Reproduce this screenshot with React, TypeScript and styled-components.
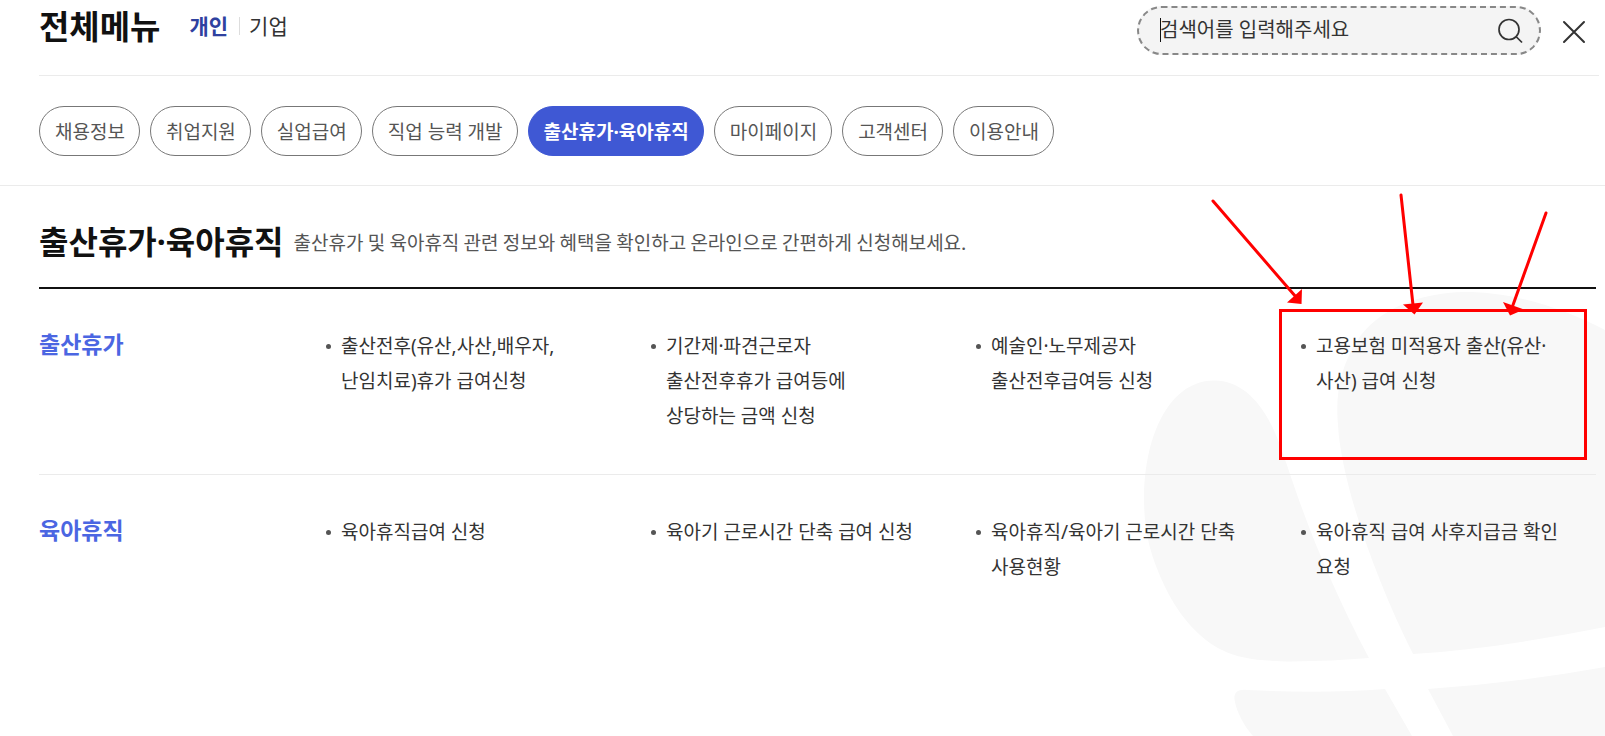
import React from "react";
import styled, { createGlobalStyle } from "styled-components";

const GlobalStyle = createGlobalStyle`
  *, *::before, *::after { box-sizing: border-box; }
  body {
    margin: 0;
    background: #fff;
    color: #333;
    font-family: "Noto Sans", "Noto Sans CJK KR", sans-serif;
    font-size: 19px;
    word-break: keep-all;
  }
  h1, h2, h3, p, ul { margin: 0; padding: 0; }
  ul { list-style: none; }
  button, input { font: inherit; color: inherit; }
  a { color: inherit; text-decoration: none; }
`;

const Page = styled.div`
  position: relative;
  isolation: isolate;
  min-height: 100vh;
  overflow: hidden;
`;

const Backdrop = styled.svg`
  position: absolute;
  z-index: -1;
  top: 180px;
  right: 0;
  width: 500px;
  height: 556px;
  fill: #f8f8f8;
`;

const Annotation = styled.svg`
  position: absolute;
  z-index: 1;
  top: 180px;
  right: 0;
  width: 500px;
  height: 300px;
  fill: #f00;
  stroke: #f00;
  pointer-events: none;
`;

const Header = styled.header`
  display: flex;
  align-items: flex-start;
  margin: 0 6px 0 39px;
  padding: 6px 8px 20px 0;
  border-bottom: 1px solid #ebebeb;
`;

const MenuTitle = styled.h1`
  font-size: 33px;
  line-height: 42px;
  font-weight: 700;
  color: #111;
`;

const AudienceList = styled.ul`
  display: flex;
  align-items: center;
  margin-left: 29px;
  height: 40px;
`;

const AudienceItem = styled.li`
  display: flex;
  align-items: center;

  & + &::before {
    content: "";
    width: 1px;
    height: 18px;
    margin: 0 9px 0 11px;
    background: #ddd;
  }
`;

const AudienceLink = styled.a<{ $active?: boolean }>`
  font-size: 21px;
  line-height: 32px;
  font-weight: ${(p) => (p.$active ? 700 : 400)};
  color: ${(p) => (p.$active ? "#2f419f" : "#333")};
`;

const SearchBox = styled.form`
  position: relative;
  display: flex;
  align-items: center;
  width: 404px;
  height: 49px;
  margin-left: auto;
  padding: 0 13px 0 21px;
  border: 2px dashed #888;
  border-radius: 25px;
  background: #f4f4f4;
`;

const SearchInput = styled.input`
  flex: 1;
  min-width: 0;
  height: 40px;
  padding: 0 0 2px;
  border: 0;
  outline: 0;
  background: transparent;
  font-size: 20px;

  &::placeholder { color: #333; opacity: 1; }
`;

const Caret = styled.span`
  position: absolute;
  top: 10px;
  left: 21px;
  width: 1px;
  height: 24px;
  background: #111;
`;

const IconButton = styled.button`
  display: flex;
  align-items: center;
  justify-content: center;
  width: 32px;
  height: 32px;
  padding: 0;
  border: 0;
  background: none;
  cursor: pointer;
`;

const CloseButton = styled(IconButton)`
  margin: 10px 1px 0 17px;
`;

const TabBar = styled.nav`
  padding: 30px 39px 29px;
  border-bottom: 1px solid #ebebeb;
`;

const TabList = styled.ul`
  display: flex;
  flex-wrap: wrap;
  gap: 10px;
`;

const Tab = styled.button<{ $active?: boolean }>`
  height: 50px;
  padding: 0 14px 0 15px;
  border: 1px solid ${(p) => (p.$active ? "#3f58d4" : "#777")};
  border-radius: 25px;
  background: ${(p) => (p.$active ? "#3f58d4" : "#fff")};
  color: ${(p) => (p.$active ? "#fff" : "#555")};
  font-size: 19px;
  font-weight: ${(p) => (p.$active ? 700 : 400)};
  white-space: nowrap;
  cursor: pointer;
`;

const Section = styled.main`
  padding: 32px 9px 0 39px;
`;

const SectionHead = styled.div`
  display: flex;
  align-items: center;
  gap: 10px;
  padding-bottom: 21px;
  border-bottom: 2px solid #111;
`;

const SectionTitle = styled.h2`
  font-size: 32px;
  line-height: 48px;
  font-weight: 700;
  color: #111;
`;

const SectionText = styled.p`
  font-family: "Noto Sans CJK KR", sans-serif;
  font-size: 19px;
  line-height: 28px;
  color: #555;
`;

const Group = styled.section`
  display: grid;
  grid-template-columns: 257px 1fr;
  padding: 40px 0;

  & + & { border-top: 1px solid #ebebeb; }
`;

const GroupName = styled.h3`
  font-size: 23px;
  line-height: 30px;
  font-weight: 700;
  color: #4b66e2;
`;

const LinkGrid = styled.ul`
  display: grid;
  grid-template-columns: repeat(4, 1fr);
`;

const LinkItem = styled.li`
  display: flex;
  gap: 10px;
  padding: 0 20px 0 30px;

  &::before {
    content: "";
    flex: none;
    width: 5px;
    height: 5px;
    margin-top: 15px;
    border-radius: 50%;
    background: #555;
  }
`;

const MenuLink = styled.a`
  font-size: 19px;
  line-height: 35px;
  white-space: pre-line;
`;

const tabs = [
  "채용정보",
  "취업지원",
  "실업급여",
  "직업 능력 개발",
  "출산휴가·육아휴직",
  "마이페이지",
  "고객센터",
  "이용안내",
];

const activeTab = "출산휴가·육아휴직";

const groups = [
  {
    name: "출산휴가",
    links: [
      "출산전후(유산,사산,배우자,\n난임치료)휴가 급여신청",
      "기간제·파견근로자\n출산전후휴가 급여등에\n상당하는 금액 신청",
      "예술인·노무제공자\n출산전후급여등 신청",
      "고용보험 미적용자 출산(유산·\n사산) 급여 신청",
    ],
  },
  {
    name: "육아휴직",
    links: [
      "육아휴직급여 신청",
      "육아기 근로시간 단축 급여 신청",
      "육아휴직/육아기 근로시간 단축\n사용현황",
      "육아휴직 급여 사후지급금 확인\n요청",
    ],
  },
];

export default function App() {
  return (
    <Page>
      <GlobalStyle />
      <Backdrop viewBox="0 0 500 556" aria-hidden="true">
        <path d="M110 200.500C135 201 157 219 173 260C179 276 183 288 187 300C205 354 232 418 264 478Q228 481 187 481.500C155 481 135 479 117 470C98 461 76 440 60 407C44 373 39 350 39 317C40 252 66 200 110 200.500Z" />
        <path d="M500 150C455 126 405 112 360 112C312 113 272 130 252 161C236 186 230 213 233 245C236 300 268 394 308 474C372 470 440 459 500 447Z" />
        <path d="M142 510C131 509 128 514 130 522C132 532 139 546 148 556H307L280 509Q218 514 142 510Z" />
        <path d="M323 509L348 556H500V487Q411 503 323 509Z" />
      </Backdrop>

      <Header>
        <MenuTitle>전체메뉴</MenuTitle>
        <AudienceList>
          <AudienceItem>
            <AudienceLink href="#personal" $active>개인</AudienceLink>
          </AudienceItem>
          <AudienceItem>
            <AudienceLink href="#company">기업</AudienceLink>
          </AudienceItem>
        </AudienceList>
        <SearchBox role="search" onSubmit={(e) => e.preventDefault()}>
          <SearchInput type="text" aria-label="검색어" placeholder="검색어를 입력해주세요" />
          <Caret />
          <IconButton type="submit" aria-label="검색">
            <svg width="26" height="26" viewBox="0 0 26 26" fill="none" stroke="#333" strokeWidth="1.700">
              <circle cx="12" cy="11.500" r="10" />
              <path d="M19 18.500L25 24.500" />
            </svg>
          </IconButton>
        </SearchBox>
        <CloseButton type="button" aria-label="닫기">
          <svg width="24" height="24" viewBox="0 0 24 24" fill="none" stroke="#333" strokeWidth="2" strokeLinecap="round">
            <path d="M2 2L22 22M22 2L2 22" />
          </svg>
        </CloseButton>
      </Header>

      <TabBar>
        <TabList>
          {tabs.map((tab) => (
            <li key={tab}>
              <Tab type="button" $active={tab === activeTab}>{tab}</Tab>
            </li>
          ))}
        </TabList>
      </TabBar>

      <Section>
        <SectionHead>
          <SectionTitle>출산휴가·육아휴직</SectionTitle>
          <SectionText>
            출산휴가 및 육아휴직 관련 정보와 혜택을 확인하고 온라인으로 간편하게 신청해보세요.
          </SectionText>
        </SectionHead>
        {groups.map((group) => (
          <Group key={group.name}>
            <GroupName>{group.name}</GroupName>
            <LinkGrid>
              {group.links.map((link) => (
                <LinkItem key={link}>
                  <MenuLink href="#menu">{link}</MenuLink>
                </LinkItem>
              ))}
            </LinkGrid>
          </Group>
        ))}
      </Section>

      <Annotation viewBox="0 0 500 300" aria-hidden="true">
        <rect x="175.500" y="130.500" width="305" height="148" fill="none" strokeWidth="3" />
        <g strokeWidth="3" strokeLinecap="round">
          <path d="M108 21L191 117" />
          <path d="M296 15L308 125" />
          <path d="M441 33L408 125" />
        </g>
        <g stroke="none">
          <path d="M197 109L196.500 124L182 122.500Z" />
          <path d="M298 124.500L318 122.500L309.500 134.500Z" />
          <path d="M398 122L419 129.500L405 135.500Z" />
        </g>
      </Annotation>
    </Page>
  );
}
